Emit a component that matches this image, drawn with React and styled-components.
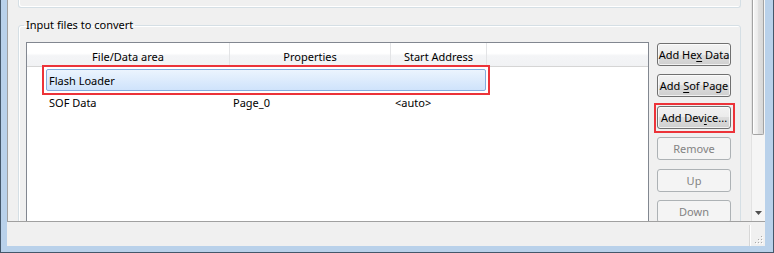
import React from 'react';
import styled, { createGlobalStyle, css } from 'styled-components';

const GlobalStyle = createGlobalStyle`
  html, body { margin: 0; padding: 0; background: #f0f0f0; }
  body {
    font-family: "Noto Sans", "Open Sans", sans-serif;
    font-size: 11px;
    color: #000;
  }
  * { box-sizing: border-box; }
`;

const RED = '#ec3339';

const marked = (t, r, b, l) => css`
  position: relative;
  &::after {
    content: '';
    position: absolute;
    top: ${t}px; right: ${r}px; bottom: ${b}px; left: ${l}px;
    border: 2px solid ${RED};
    pointer-events: none;
  }
`;

const Window = styled.div`
  width: 774px;
  height: 253px;
  display: flex;
  flex-direction: column;
  background: #b9d1ea;
  border: 1px solid #44576a;
  border-top: none;
  padding: 0 8px 6px 6px;
`;

const Client = styled.div`
  flex: 1;
  min-height: 0;
  display: flex;
  flex-direction: column;
  background: #f0f0f0;
`;

const ScrollArea = styled.div`
  height: 222px;
  flex: none;
  display: flex;
  border-left: 1px solid #a0a0a0;
  border-bottom: 1px solid #a0a0a0;
  overflow: hidden;
`;

const Content = styled.div`
  flex: 1;
  min-width: 0;
  overflow: hidden;
  padding: 0 10px;
  display: flex;
  flex-direction: column;
`;

const TopBox = styled.div`
  height: 8px;
  flex: none;
  border: 1px solid #d5dfe5;
  border-top: none;
  border-radius: 0 0 3px 3px;
  box-shadow: inset 1px -1px 0 #fff;
`;

const GroupBox = styled.fieldset`
  margin: 9px 0 0;
  min-width: 0;
  flex: none;
  height: 240px;
  border: 1px solid #d5dfe5;
  border-radius: 3px;
  box-shadow: inset 1px 1px 0 #fff;
  padding: 9px 9px 0 7px;
  display: flex;
  gap: 8px;
  align-items: flex-start;
`;

const Legend = styled.legend`
  padding: 0 2px;
  margin-left: -2px;
  line-height: 16px;
  color: #000;
`;

const Table = styled.div`
  width: 623px;
  height: 200px;
  flex: none;
  border: 1px solid #828790;
  background: #fff;
`;

const Header = styled.div`
  display: flex;
  height: 24px;
  border-bottom: 1px solid #d5d5d5;
  background: linear-gradient(#ffffff 0%, #ffffff 45%, #f4f5f7 55%, #f1f2f4 100%);
`;

const HeaderCell = styled.div`
  width: ${p => p.$w}px;
  flex: none;
  border-right: 1px solid #e3e4e6;
  display: flex;
  align-items: center;
  justify-content: center;
  padding-top: 3px;
  white-space: nowrap;
`;

const HeaderFill = styled.div`
  flex: 1;
`;

const Body = styled.div`
  padding-top: 2px;
  display: flex;
  flex-direction: column;
`;

const Row = styled.div`
  margin-left: ${p => p.$indent}px;
  width: 440px;
  height: 22px;
  display: flex;
  align-items: center;
  border: 1px solid transparent;
  border-radius: 2px;
  ${p => p.$selected && css`
    border-color: #84acdd;
    background: linear-gradient(#ebf4fe, #cfe3fb);
  `}
  ${p => p.$marked && marked(-5, -5, -5, -5)}
`;

const Cell = styled.div`
  width: ${p => (p.$w ? `${p.$w}px` : 'auto')};
  flex: ${p => (p.$w ? 'none' : '1')};
  padding-left: ${p => p.$pad}px;
  white-space: nowrap;
  overflow: hidden;
`;

const ButtonColumn = styled.div`
  margin-top: 1px;
  width: 74px;
  flex: none;
  display: flex;
  flex-direction: column;
  gap: 8.4px;
`;

const Button = styled.button`
  height: 23px;
  width: 74px;
  padding: 0;
  font: inherit;
  white-space: nowrap;
  border-radius: 3px;
  border: 1px solid #707070;
  color: #000;
  background: linear-gradient(#f2f2f2 0%, #ebebeb 50%, #dddddd 50%, #cfcfcf 100%);
  box-shadow: inset 0 0 0 1px rgba(255, 255, 255, 0.7);
  ${p => p.disabled && css`
    border-color: #adb2b5;
    background: #f4f4f4;
    color: #838383;
    box-shadow: none;
  `}
  ${p => p.$marked && marked(-4, -5, -5, -4)}
`;

const Accel = styled.span`
  text-decoration: underline;
  text-underline-offset: 2px;
`;

const Scrollbar = styled.div`
  width: 14px;
  flex: none;
  display: flex;
  flex-direction: column;
  background: #f5f5f5;
  border-left: 1px solid #e2e2e2;
`;

const Thumb = styled.div`
  height: 135px;
  flex: none;
  margin-right: 1px;
  border: 1px solid #a3a3a3;
  border-top: none;
  border-radius: 0 0 2px 2px;
  background: linear-gradient(to right, #f7f7f7, #ececec 45%, #e0e0e0 55%, #d8d8d8);
  box-shadow: inset 1px 0 0 #fff;
`;

const Track = styled.div`
  flex: 1;
`;

const ArrowButton = styled.div`
  height: 17px;
  flex: none;
  display: flex;
  align-items: center;
  justify-content: center;
  padding-right: 1px;
`;

const StatusBar = styled.div`
  flex: 1;
  display: flex;
  justify-content: flex-end;
  align-items: stretch;
`;

const StatusSeparator = styled.div`
  width: 2px;
  margin: 3px 0 0;
  border-left: 1px solid #d7d7d7;
  border-right: 1px solid #ffffff;
`;

const Grip = styled.div`
  width: 14px;
  display: flex;
  align-items: flex-end;
  justify-content: flex-end;
  padding: 0 1px 1px 0;
`;

const GripIcon = () => (
  <svg width="9" height="9" viewBox="0 0 9 9">
    {[[7, 1], [4, 4], [7, 4], [1, 7], [4, 7], [7, 7]].map(([x, y]) => (
      <g key={`${x}-${y}`}>
        <rect x={x} y={y} width="1" height="1" fill="#fff" />
        <rect x={x - 1} y={y - 1} width="1" height="1" fill="#a9a9a9" />
      </g>
    ))}
  </svg>
);

const DownArrow = () => (
  <svg width="7" height="4" viewBox="0 0 7 4">
    <path d="M0 0 H7 L3.5 4 Z" fill="#505050" />
  </svg>
);

const columns = [
  { label: 'File/Data area', w: 203 },
  { label: 'Properties', w: 161 },
  { label: 'Start Address', w: 96 },
];

const rows = [
  { cells: ['Flash Loader', '', ''], selected: true, marked: true },
  { cells: ['SOF Data', 'Page_0', '<auto>'] },
];

export default function App() {
  return (
    <>
      <GlobalStyle />
      <Window>
        <Client>
          <ScrollArea>
            <Content>
              <TopBox />
              <GroupBox>
                <Legend>Input files to convert</Legend>
                <Table>
                  <Header>
                    {columns.map(c => (
                      <HeaderCell key={c.label} $w={c.w}>{c.label}</HeaderCell>
                    ))}
                    <HeaderFill />
                  </Header>
                  <Body>
                    {rows.map((r, i) => (
                      <Row key={i} $indent={19} $selected={r.selected} $marked={r.marked}>
                        <Cell $w={183} $pad={2}>{r.cells[0]}</Cell>
                        <Cell $w={161} $pad={3}>{r.cells[1]}</Cell>
                        <Cell $pad={4}>{r.cells[2]}</Cell>
                      </Row>
                    ))}
                  </Body>
                </Table>
                <ButtonColumn>
                  <Button>Add He<Accel>x</Accel> Data</Button>
                  <Button>Add <Accel>S</Accel>of Page</Button>
                  <Button $marked>Add Dev<Accel>i</Accel>ce...</Button>
                  <Button disabled>Remove</Button>
                  <Button disabled>Up</Button>
                  <Button disabled>Down</Button>
                </ButtonColumn>
              </GroupBox>
            </Content>
            <Scrollbar>
              <Thumb />
              <Track />
              <ArrowButton><DownArrow /></ArrowButton>
            </Scrollbar>
          </ScrollArea>
          <StatusBar>
            <StatusSeparator />
            <Grip><GripIcon /></Grip>
          </StatusBar>
        </Client>
      </Window>
    </>
  );
}
